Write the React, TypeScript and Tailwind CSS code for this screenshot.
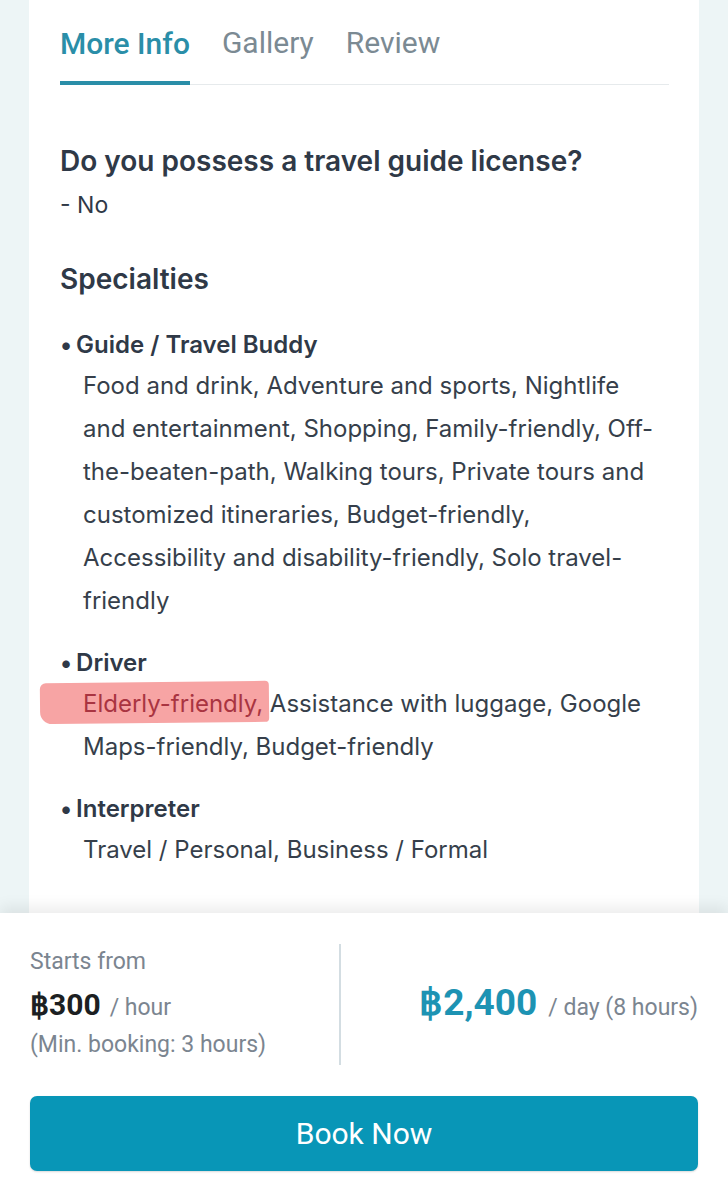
import React from "react";

const specialties = [
  {
    title: "Guide / Travel Buddy",
    items:
      "Food and drink, Adventure and sports, Nightlife and entertainment, Shopping, Family-friendly, Off-the-beaten-path, Walking tours, Private tours and customized itineraries, Budget-friendly, Accessibility and disability-friendly, Solo travel-friendly",
  },
  { title: "Driver", items: "" },
  { title: "Interpreter", items: "Travel / Personal, Business / Formal" },
];

const App = () => {
  return (
    <div className="h-[1200px] flex flex-col bg-[#edf5f6] overflow-hidden font-['Roboto',sans-serif]">
      <div className="flex-1 overflow-hidden px-[29px]">
        <div className="bg-white h-full pl-[31px] pr-[30px] pt-[21px]">
          {/* tabs */}
          <div className="flex items-end gap-[32px] border-b border-[#e6eaec] text-[30px]">
            <div className="text-[#2a8ea8] font-medium pb-[15px] border-b-[4px] border-[#2a8ea8] -mb-px leading-[44px]">
              More Info
            </div>
            <div className="text-[#7b8a93] pb-[19px] leading-[44px]">Gallery</div>
            <div className="text-[#7b8a93] pb-[19px] leading-[44px]">Review</div>
          </div>

          <div className="font-['Inter',sans-serif] text-[#2f3947]">
            <h2 className="mt-[58px] text-[28px] font-semibold leading-[36px]">
              Do you possess a travel guide license?
            </h2>
            <p className="text-[23px] leading-[36px] mt-[8px]">- No</p>

            <h2 className="mt-[37px] text-[28px] font-semibold leading-[38px]">Specialties</h2>

            <div className="mt-[28px] flex flex-col gap-[22px]">
              {specialties.map((s) => (
                <div key={s.title}>
                  <div className="text-[24px] font-semibold leading-[38px]">
                    <span className="mr-[4px]">•</span>
                    {s.title}
                  </div>
                  <div className="pl-[23px] pr-[4px] text-[24px] leading-[43px] text-[#363f4b]">
                    {s.title === "Driver" ? (
                      <>
                        <span className="relative">
                          <span className="absolute left-[-43px] right-[-6px] top-[-7px] bottom-[-5px] bg-[#f7a4a4] rounded-l-[12px] rounded-r-[4px] rounded-tl-[6px] -rotate-[0.6deg]" />
                          <span className="relative text-[#a93441]">Elderly-friendly,</span>
                        </span>{" "}
                        Assistance with luggage, Google Maps-friendly, Budget-friendly
                      </>
                    ) : (
                      s.items
                    )}
                  </div>
                </div>
              ))}
            </div>
          </div>
        </div>
      </div>

      {/* bottom bar */}
      <div className="h-[287px] bg-white shadow-[0_-6px_14px_rgba(0,0,0,0.08)] relative px-[30px] pt-[31px]">
        <div className="flex">
          <div className="w-[311px] h-[121px] border-r-2 border-[#d3dde2] pt-[3px]">
            <div className="text-[23px] text-[#7b8590] leading-[30px]">Starts from</div>
            <div className="mt-[10px] flex items-baseline h-[36px]">
              <span className="text-[30px] font-bold text-[#1c1f22] leading-[36px]">฿300</span>
              <span className="ml-[9px] text-[23px] text-[#7b8590]">/ hour</span>
            </div>
            <div className="mt-[7px] text-[23px] text-[#7b8590] leading-[30px]">
              (Min. booking: 3 hours)
            </div>
          </div>
          <div className="flex-1 flex items-baseline justify-end pt-[37px]">
            <span className="text-[37px] font-bold text-[#1d93b3] leading-[44px]">฿2,400</span>
            <span className="ml-[11px] text-[23px] text-[#7b8590]">/ day (8 hours)</span>
          </div>
        </div>
        <button className="mt-[31px] w-full h-[75px] rounded-[7px] bg-[#0896b7] text-white text-[30px] shadow-[0_1px_2px_rgba(0,0,0,0.15)]">
          Book Now
        </button>
      </div>
    </div>
  );
};

export default App;
